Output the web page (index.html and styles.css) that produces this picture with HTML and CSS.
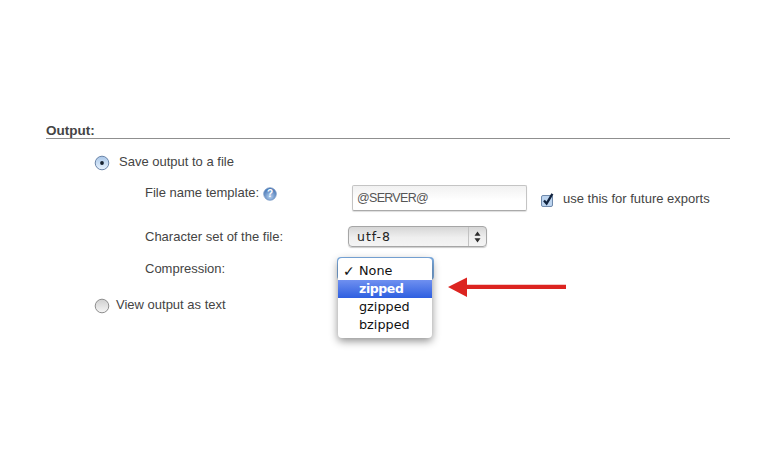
FILE: index.html
```html
<!DOCTYPE html>
<html lang="en">
<head>
  <meta charset="UTF-8">
  <meta name="viewport" content="width=device-width, initial-scale=1.0">
  <title>Export output</title>
  <link rel="stylesheet" href="styles.css">
</head>
<body>
  <div class="output">
    <h3 class="output-title">Output:</h3>

    <div class="radio-row save-row">
      <svg class="radio" width="16" height="16" viewBox="0 0 16 16">
        <defs>
          <linearGradient id="radioOn" x1="0" y1="0" x2="0" y2="1">
            <stop offset="0" stop-color="#a9c6e8"/>
            <stop offset="0.5" stop-color="#c9ddf3"/>
            <stop offset="1" stop-color="#eaf4ff"/>
          </linearGradient>
        </defs>
        <circle cx="8" cy="8" r="6.8" fill="url(#radioOn)" stroke="#6a84a8"/>
        <circle cx="8" cy="8" r="1.9" fill="#16202e"/>
      </svg>
      <span>Save output to a file</span>
    </div>

    <div class="form-row name-row">
      <label class="field-label">File name template:
        <svg class="help" width="14" height="14" viewBox="0 0 14 14">
          <defs>
            <radialGradient id="helpBlue" cx="0.5" cy="0.7" r="0.7">
              <stop offset="0" stop-color="#b5cfee"/>
              <stop offset="1" stop-color="#3a6cae"/>
            </radialGradient>
          </defs>
          <circle cx="7" cy="7" r="6.3" fill="url(#helpBlue)" stroke="#7c9cc6" stroke-width="0.8"/>
          <text x="7" y="10.4" class="help-mark">?</text>
        </svg>
      </label>
      <div class="text-input">@SERVER@</div>
      <svg class="checkbox" width="16" height="16" viewBox="0 0 16 16">
        <rect x="1.5" y="3.5" width="11" height="11" rx="1.5" fill="#bcd4ef" stroke="#6f89ab"/>
        <path d="M4 8.5 L6.6 11.6 L12.4 1.8" fill="none" stroke="#10233f" stroke-width="2.3"/>
      </svg>
      <span class="future-label">use this for future exports</span>
    </div>

    <div class="form-row charset-row">
      <label class="field-label">Character set of the file:</label>
      <div class="select">
        <span class="select-value">utf-8</span>
        <span class="select-arrows">
          <svg width="7" height="12" viewBox="0 0 7 12">
            <path d="M3.5 0.5 L6.5 4.8 L0.5 4.8 Z M3.5 11.5 L0.5 7.2 L6.5 7.2 Z" fill="#2c2c2c"/>
          </svg>
        </span>
      </div>
    </div>

    <div class="form-row compression-row">
      <label class="field-label">Compression:</label>
      <div class="menu-anchor">
        <div class="focus-select"></div>
        <ul class="menu">
          <li class="menu-item"><span class="tick">✓</span>None</li>
          <li class="menu-item active">zipped</li>
          <li class="menu-item">gzipped</li>
          <li class="menu-item">bzipped</li>
        </ul>
        <svg class="red-arrow" width="120" height="22" viewBox="0 0 120 22">
          <path d="M1 11 L20 1.5 L20 8.8 L119 8.8 L119 13 L20 13 L20 21 Z" fill="#dc2420"/>
        </svg>
      </div>
    </div>

    <div class="radio-row view-row">
      <svg class="radio" width="16" height="16" viewBox="0 0 16 16">
        <defs>
          <linearGradient id="radioOff" x1="0" y1="0" x2="0" y2="1">
            <stop offset="0" stop-color="#cfcfcf"/>
            <stop offset="1" stop-color="#f6f6f6"/>
          </linearGradient>
        </defs>
        <circle cx="8" cy="8" r="6.8" fill="url(#radioOff)" stroke="#8e8e8e"/>
      </svg>
      <span>View output as text</span>
    </div>
  </div>
</body>
</html>
```

FILE: styles.css
```css
body {
  margin: 0;
  min-height: 450px;
  background-color: #fff;
  font-family: "Liberation Sans", Arial, sans-serif;
  font-size: 13px;
  color: #444;
}
.output {
  width: 684px;
  margin-left: 46px;
  padding-top: 123px;
}
.output-title {
  margin: 0;
  font-size: 13.5px;
  line-height: 15px;
  color: #444;
  border-bottom: 1px solid #8f8f8f;
}
.radio-row {
  display: flex;
  align-items: flex-start;
  height: 16px;
  line-height: 16px;
}
.radio {
  margin-top: 1px;
}
.save-row {
  margin: 15px 0 0 48px;
  gap: 9px;
}
.view-row {
  margin: 17px 0 0 48px;
  gap: 6px;
}
.form-row {
  display: flex;
  margin-left: 99px;
}
.field-label {
  display: flex;
  gap: 4px;
  width: 203px;
  line-height: 15px;
}
.name-row {
  margin-top: 15px;
  height: 26px;
  align-items: flex-start;
}
.help {
  margin-top: 2px;
}
.text-input {
  width: 175px;
  height: 26px;
  margin-left: 4px;
  padding-left: 4px;
  box-sizing: border-box;
  border: 1px solid #c4c4c4;
  border-bottom-color: #aaa;
  border-radius: 2px;
  background: linear-gradient(#f1f1f1, #fff 60%);
  font-size: 12.5px;
  line-height: 25px;
  letter-spacing: -0.7px;
  color: #555;
  box-shadow: 0 1px 1px #ddd;
}
.checkbox {
  margin: 7px 0 0 13px;
}
.future-label {
  margin-left: 7px;
  line-height: 27px;
}
.help-mark {
  font-family: "Liberation Sans", Arial, sans-serif;
  font-size: 10px;
  font-weight: bold;
  fill: #fff;
  text-anchor: middle;
}
.charset-row {
  margin-top: 15px;
  height: 21px;
  align-items: center;
}
.select {
  display: flex;
  width: 139px;
  height: 21px;
  box-sizing: border-box;
  border: 1px solid #a6a6a6;
  border-radius: 4px;
  background: linear-gradient(#d6d6d6, #efefef 55%, #f4f4f4);
  box-shadow: 0 1px 1px #ccc;
}
.select-value {
  flex: 1;
  padding-left: 8px;
  font-family: "DejaVu Sans", sans-serif;
  font-size: 12.5px;
  line-height: 19px;
  letter-spacing: 1px;
  color: #222;
  border-right: 1px solid #c2c2c2;
}
.select-arrows {
  display: flex;
  align-items: center;
  justify-content: center;
  width: 17px;
}
.compression-row {
  margin-top: 10px;
  height: 23px;
  align-items: center;
}
.menu-anchor {
  position: relative;
  width: 97px;
  height: 23px;
  margin-left: -11px;
}
.focus-select {
  width: 97px;
  height: 23px;
  box-sizing: border-box;
  border: 2px solid #7fb0e6;
  border-radius: 4px;
}
.menu {
  position: absolute;
  top: 1px;
  left: 1px;
  width: 94px;
  margin: 0;
  padding: 4px 0;
  list-style: none;
  background-color: #fff;
  border-radius: 4px;
  box-shadow: 0 3px 8px rgba(0, 0, 0, 0.45);
}
.menu-item {
  position: relative;
  height: 18px;
  padding-left: 21px;
  font-family: "DejaVu Sans", sans-serif;
  font-size: 12.8px;
  line-height: 18px;
  color: #111;
}
.menu-item.active {
  background: linear-gradient(#6f90f0, #2e5fe0);
  color: #fff;
  font-weight: bold;
  font-size: 12.5px;
  letter-spacing: -0.4px;
}
.tick {
  position: absolute;
  left: 5px;
  font-size: 14px;
  font-weight: bold;
}
.red-arrow {
  position: absolute;
  top: 19px;
  left: 110px;
}
```
